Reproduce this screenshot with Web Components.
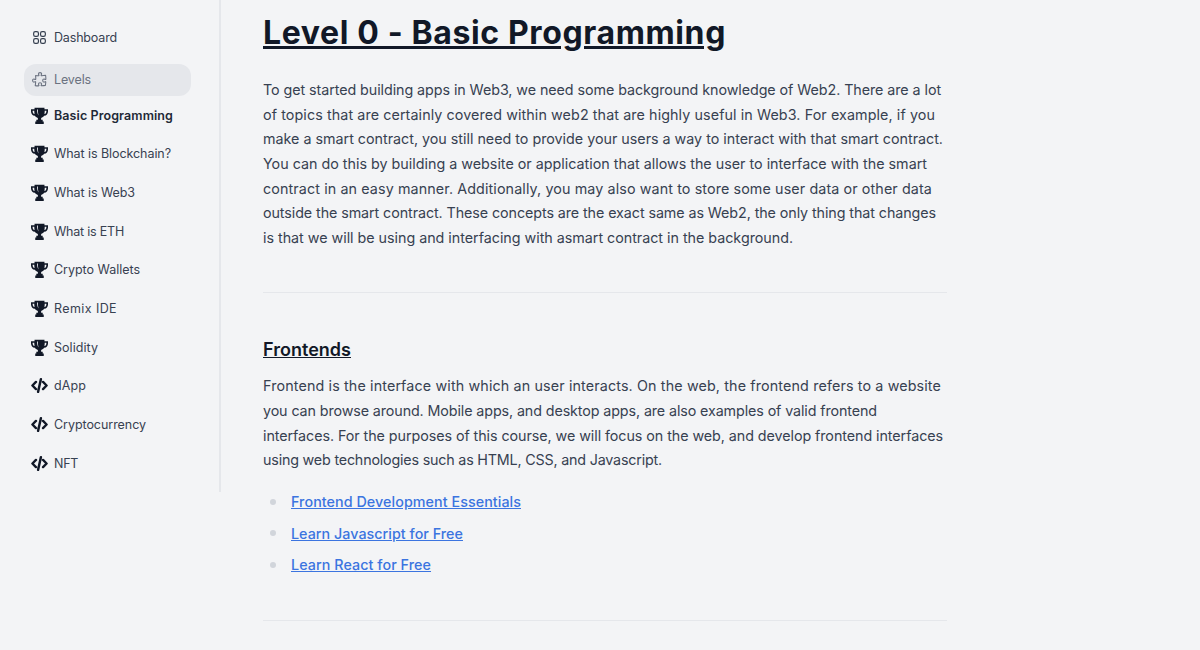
<!DOCTYPE html>
<html><head><meta charset="utf-8">
<style>
html,body{margin:0;height:650px;overflow:hidden;background:#f3f4f6;}
body{font-family:"Inter","Noto Sans",sans-serif;}
</style></head>
<body>
<app-shell>
  <side-nav slot="nav">
    <nav-item icon="grid"><fit-text w="63">Dashboard</fit-text></nav-item>
    <nav-item icon="puzzle" active><fit-text w="37">Levels</fit-text></nav-item>
    <nav-item icon="trophy" current><fit-text w="119">Basic Programming</fit-text></nav-item>
    <nav-item icon="trophy"><fit-text w="117">What is Blockchain?</fit-text></nav-item>
    <nav-item icon="trophy"><fit-text w="81">What is Web3</fit-text></nav-item>
    <nav-item icon="trophy"><fit-text w="70">What is ETH</fit-text></nav-item>
    <nav-item icon="trophy"><fit-text w="86">Crypto Wallets</fit-text></nav-item>
    <nav-item icon="trophy"><fit-text w="63">Remix IDE</fit-text></nav-item>
    <nav-item icon="trophy"><fit-text w="44">Solidity</fit-text></nav-item>
    <nav-item icon="code"><fit-text w="32">dApp</fit-text></nav-item>
    <nav-item icon="code"><fit-text w="92">Cryptocurrency</fit-text></nav-item>
    <nav-item icon="code"><fit-text w="24">NFT</fit-text></nav-item>
  </side-nav>
  <doc-article>
    <h1 slot="title"><fit-text w="463">Level 0 - Basic Programming</fit-text></h1>
    <doc-para><fit-text w="678">To get started building apps in Web3, we need some background knowledge of Web2. There are a lot</fit-text><br><fit-text w="672">of topics that are certainly covered within web2 that are highly useful in Web3. For example, if you</fit-text><br><fit-text w="680">make a smart contract, you still need to provide your users a way to interact with that smart contract.</fit-text><br><fit-text w="664">You can do this by building a website or application that allows the user to interface with the smart</fit-text><br><fit-text w="669">contract in an easy manner. Additionally, you may also want to store some user data or other data</fit-text><br><fit-text w="673">outside the smart contract. These concepts are the exact same as Web2, the only thing that changes</fit-text><br><fit-text w="530">is that we will be using and interfacing with asmart contract in the background.</fit-text></doc-para>
    <doc-rule></doc-rule>
    <doc-heading><fit-text w="88">Frontends</fit-text></doc-heading>
    <doc-para tight><fit-text w="678">Frontend is the interface with which an user interacts. On the web, the frontend refers to a website</fit-text><br><fit-text w="614">you can browse around. Mobile apps, and desktop apps, are also examples of valid frontend</fit-text><br><fit-text w="680">interfaces. For the purposes of this course, we will focus on the web, and develop frontend interfaces</fit-text><br><fit-text w="399">using web technologies such as HTML, CSS, and Javascript.</fit-text></doc-para>
    <link-list>
      <link-item><fit-text w="230">Frontend Development Essentials</fit-text></link-item>
      <link-item><fit-text w="172">Learn Javascript for Free</fit-text></link-item>
      <link-item><fit-text w="140">Learn React for Free</fit-text></link-item>
    </link-list>
    <doc-rule last></doc-rule>
  </doc-article>
</app-shell>
<script>
const ICONS={
 grid:'<svg viewBox="0 0 24 24" fill="none" stroke="currentColor" stroke-width="1.7" stroke-linecap="round" stroke-linejoin="round"><path d="M3.75 6A2.25 2.25 0 016 3.75h2.25A2.25 2.25 0 0110.5 6v2.25a2.25 2.25 0 01-2.25 2.25H6a2.25 2.25 0 01-2.25-2.25V6zM3.75 15.75A2.25 2.25 0 016 13.5h2.25a2.25 2.25 0 012.25 2.25V18a2.25 2.25 0 01-2.25 2.25H6A2.25 2.25 0 013.75 18v-2.25zM13.5 6a2.25 2.25 0 012.25-2.25H18A2.25 2.25 0 0120.25 6v2.25A2.25 2.25 0 0118 10.5h-2.25a2.25 2.25 0 01-2.25-2.25V6zM13.5 15.75a2.25 2.25 0 012.25-2.25H18a2.25 2.25 0 012.25 2.25V18A2.25 2.25 0 0118 20.25h-2.25A2.25 2.25 0 0113.5 18v-2.25z"/></svg>',
 puzzle:'<svg viewBox="0 0 24 24" fill="none" stroke="currentColor" stroke-width="1.5" stroke-linecap="round" stroke-linejoin="round"><path d="M14.25 6.087c0-.355.186-.676.401-.959.221-.29.349-.634.349-1.003 0-1.036-1.007-1.875-2.25-1.875s-2.25.84-2.25 1.875c0 .369.128.713.349 1.003.215.283.401.604.401.959v0a.64.64 0 01-.657.643 48.39 48.39 0 01-4.163-.3c.186 1.613.293 3.25.315 4.907a.656.656 0 01-.658.663v0c-.355 0-.676-.186-.959-.401a1.647 1.647 0 00-1.003-.349c-1.036 0-1.875 1.007-1.875 2.25s.84 2.25 1.875 2.25c.369 0 .713-.128 1.003-.349.283-.215.604-.401.959-.401v0c.31 0 .555.26.532.57a48.039 48.039 0 01-.642 5.056c1.518.19 3.058.309 4.616.354a.64.64 0 00.657-.643v0c0-.355-.186-.676-.401-.959a1.647 1.647 0 01-.349-1.003c0-1.035 1.008-1.875 2.25-1.875 1.243 0 2.25.84 2.25 1.875 0 .369-.128.713-.349 1.003-.215.283-.4.604-.4.959v0c0 .333.277.599.61.58a48.1 48.1 0 005.427-.63 48.05 48.05 0 00.582-4.717.532.532 0 00-.533-.57v0c-.355 0-.676.186-.959.401-.29.221-.634.349-1.003.349-1.035 0-1.875-1.007-1.875-2.25s.84-2.25 1.875-2.25c.37 0 .713.128 1.003.349.283.215.604.401.96.401v0a.656.656 0 00.658-.663 48.422 48.422 0 00-.37-5.36c-1.886.342-3.81.574-5.766.689a.578.578 0 01-.61-.58v0z"/></svg>',
 trophy:'<svg viewBox="0 0 24 24" fill="currentColor"><path fill-rule="evenodd" d="M5 1h14v2h5v3.200c0 3.200-2.200 5.800-5.400 6.300-1 1.500-2.400 2.500-4.300 2.900V18h2.200v2.500H18V24H6v-3.500h1.500V18h2.200v-2.600c-1.900-.4-3.300-1.400-4.300-2.900C2.200 12 0 9.400 0 6.200V3h5zM2.300 5.200v1c0 1.700 1 3.200 2.800 3.800-.3-1.500-.5-3.100-.5-4.800zm19.400 0h-2.300c0 1.700-.2 3.300-.5 4.800 1.800-.6 2.800-2.100 2.800-3.800zM8.600 3.700c0 3.700.7 6.500 2.100 8.400-.8-2.500-1-5.300-.9-8.400z"/></svg>',
 code:'<svg viewBox="0 0 24 24" fill="none" stroke="currentColor" stroke-width="3.400" stroke-linecap="round" stroke-linejoin="round"><path d="M7 7 2 12l5 5M17 7l5 5-5 5M14 3 10 21"/></svg>'
};
function def(name,html,setup){
  customElements.define(name,class extends HTMLElement{
    constructor(){super();const r=this.attachShadow({mode:'open'});r.innerHTML=html;}
    connectedCallback(){if(setup)setup(this,this.shadowRoot);}
  });
}
def('app-shell',`<style>:host{display:flex;align-items:flex-start;width:1200px;height:650px;overflow:hidden;box-sizing:border-box}</style><slot name="nav"></slot><slot></slot>`);
def('side-nav',`<style>:host{display:flex;flex-direction:column;flex:none;box-sizing:border-box;width:221px;height:492px;padding:18.600px 28px 0 24px;border-right:2px solid #e5e7eb}</style><slot></slot>`);
def('nav-item',`<style>
:host{display:flex;align-items:center;gap:6px;height:38.700px;padding-left:7px;color:#374151;font-size:12.500px;white-space:nowrap;box-sizing:border-box}
:host([active]){height:32px;margin:6.400px 0 0;padding-left:7px;background:#e5e7eb;border-radius:12px;color:#6b7280}
:host([current]){font-weight:600;color:#1f2937}
.i{flex:none;width:17px;height:17px;display:flex;color:#111827}
:host([active]) .i{color:#6b7280}
:host([icon="grid"]) .i{color:#374151}
svg{width:100%;height:100%}
</style><span class="i"></span><slot></slot>`,(el,r)=>{r.querySelector('.i').innerHTML=ICONS[el.getAttribute('icon')];});
def('doc-article',`<style>
:host{display:block;box-sizing:border-box;width:684px;margin-left:42px;color:#374151}
::slotted(h1){margin:0;font-size:32px;line-height:38px;font-weight:700;color:#111827;text-decoration:underline;padding-top:14px}
</style><slot name="title"></slot><slot></slot>`);
def('doc-para',`<style>:host{display:block;margin-top:26px;font-size:14.300px;line-height:24.640px;white-space:nowrap}:host([tight]){margin-top:12px}</style><slot></slot>`);
def('doc-rule',`<style>:host{display:block;height:1px;background:#e5e7eb;margin-top:42px}:host([last]){margin-top:39px}</style>`);
def('doc-heading',`<style>:host{display:block;margin-top:45px;font-size:18px;line-height:24px;font-weight:600;color:#111827;text-decoration:underline}</style><slot></slot>`);
def('link-list',`<style>:host{display:flex;flex-direction:column;margin-top:13px}</style><slot></slot>`);
def('link-item',`<style>
:host{display:flex;align-items:center;height:31.500px;padding-left:7px;gap:15px;font-size:14.300px;font-weight:500}
i{width:6px;height:6px;border-radius:50%;background:#d1d5db}
a{color:#3b74e0;text-decoration:underline}
</style><i></i><a href="#"><slot></slot></a>`);
def('fit-text',`<style>:host{display:inline;white-space:nowrap}</style><slot></slot>`,(el)=>{
  const w=parseFloat(el.getAttribute('w'));
  const natural=el.getBoundingClientRect().width;
  el.style.letterSpacing=((w-natural)/el.textContent.length).toFixed(3)+'px';
});
</script>
</body></html>
